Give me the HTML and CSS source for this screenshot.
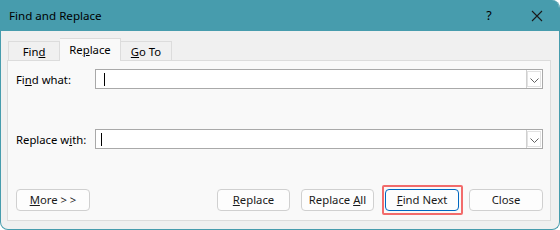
FILE: index.html
```html
<!DOCTYPE html>
<html>
<head>
<meta charset="utf-8">
<link rel="stylesheet" href="styles.css">
</head>
<body>
<div class="window">
  <div class="titlebar">
    <span class="title">Find and Replace</span>
    <span class="tb-help">?</span>
    <span class="tb-close">
      <svg width="12" height="12" viewBox="0 0 12 12"><path d="M1 1 L11 11 M11 1 L1 11" stroke="#1a1a1a" stroke-width="1.1" fill="none"/></svg>
    </span>
  </div>
  <div class="body">
    <div class="tabs">
      <div class="tab">Fin<u>d</u></div>
      <div class="tab active">Re<u>p</u>lace</div>
      <div class="tab"><u>G</u>o To</div>
    </div>
    <div class="panel">
      <div class="row">
        <label class="lbl">Fi<u>n</u>d what:</label>
        <div class="combo">
          <span class="caret"></span>
          <span class="drop"><svg width="9" height="5" viewBox="0 0 9 5"><path d="M0.5 0.5 L4.5 4.5 L8.5 0.5" stroke="#606060" stroke-width="1" fill="none"/></svg></span>
        </div>
      </div>
      <div class="row">
        <label class="lbl">Replace w<u>i</u>th:</label>
        <div class="combo">
          <span class="caret caret2"></span>
          <span class="drop"><svg width="9" height="5" viewBox="0 0 9 5"><path d="M0.5 0.5 L4.5 4.5 L8.5 0.5" stroke="#606060" stroke-width="1" fill="none"/></svg></span>
        </div>
      </div>
      <div class="buttons">
        <button class="btn"><u>M</u>ore &gt; &gt;</button>
        <div class="spacer"></div>
        <button class="btn"><u>R</u>eplace</button>
        <button class="btn">Replace <u>A</u>ll</button>
        <button class="btn default"><u>F</u>ind Next</button>
        <button class="btn">Close</button>
      </div>
    </div>
  </div>
</div>
</body>
</html>
```

FILE: styles.css
```css
html, body {
  margin: 0;
  padding: 0;
  background: #ffffff;
}
body {
  font-family: "Noto Sans", "Open Sans", sans-serif;
  font-size: 11.3px;
  color: #000;
}
u {
  text-decoration: underline;
  text-underline-offset: 1px;
}
.window {
  width: 560px;
  height: 230px;
  box-sizing: border-box;
  border: 1px solid #479cad;
  border-top: none;
  border-radius: 0 8px 8px 8px;
  background: #f0f0f0;
  overflow: hidden;
  display: flex;
  flex-direction: column;
}
.titlebar {
  height: 31px;
  flex: none;
  background: #479cad;
  display: flex;
  align-items: center;
  padding-left: 8px;
  font-size: 11.6px;
}
.title {
  flex: 1;
  padding-bottom: 1px;
}
.tb-help {
  width: 20px;
  font-size: 12.5px;
  margin-right: 32px;
  text-align: center;
  padding-bottom: 1px;
}
.tb-close {
  width: 12px;
  height: 12px;
  display: flex;
  margin-right: 16px;
}
.body {
  flex: 1;
  padding: 7px 8px 8px 6px;
  display: flex;
  flex-direction: column;
}
.tabs {
  display: flex;
  align-items: flex-end;
  height: 22px;
  padding-left: 1px;
  position: relative;
  z-index: 1;
}
.tab {
  height: 19px;
  box-sizing: border-box;
  border: 1px solid #dcdcdc;
  border-bottom: none;
  background: #f0f0f0;
  display: flex;
  align-items: center;
  justify-content: center;
  padding-top: 1px;
}
.tab:nth-child(1) { width: 52px; }
.tab:nth-child(3) { width: 51px; border-left: none; }
.tab.active {
  width: 61px;
  height: 23px;
  background: #f9f9f9;
  border-bottom: none;
  margin-bottom: -1px;
  border-left: none;
  padding-top: 0;
  padding-bottom: 2px;
}
.panel {
  height: 161px;
  box-sizing: border-box;
  border: 1px solid #dcdcdc;
  background: #f9f9f9;
  padding: 8px 7px 0 8px;
  display: flex;
  flex-direction: column;
}
.row {
  display: flex;
  align-items: center;
  height: 20px;
  margin-bottom: 40px;
}
.lbl {
  width: 79px;
  flex: none;
}
.combo {
  flex: 1;
  height: 20px;
  box-sizing: border-box;
  border: 1px solid #a9a9a9;
  background: #fff;
  display: flex;
  align-items: center;
  justify-content: space-between;
}
.caret {
  width: 1px;
  height: 13px;
  background: #000;
  margin-left: 8px;
}
.caret2 {
  margin-left: 5px;
}
.drop {
  width: 16px;
  height: 18px;
  box-sizing: border-box;
  border-left: 1px solid #d0d0d0;
  background: #fff;
  display: flex;
  align-items: center;
  justify-content: center;
  padding-top: 2px;
  outline: 1px solid #e2e2e2;
  outline-offset: -2px;
}
.buttons {
  display: flex;
  align-items: center;
  height: 22px;
}
.spacer { flex: 1; }
.btn {
  width: 73px;
  height: 22px;
  box-sizing: border-box;
  border: 1px solid #d0d0d0;
  border-radius: 4px;
  background: #fdfdfd;
  font-family: inherit;
  font-size: 11.3px;
  color: #1a1a1a;
  padding: 0 0 1px 0;
  margin: 0 0 0 11px;
}
.btn:first-child { margin-left: 0; width: 74px; }
.btn.default {
  border-color: #0067c0;
  width: 74px;
  position: relative;
}
.btn.default::after {
  content: "";
  position: absolute;
  left: -4px;
  top: -5px;
  right: -5px;
  bottom: -5px;
  border: 2px solid #f26b6b;
  border-radius: 2px;
  pointer-events: none;
}
.btn:last-child { width: 74px; margin-left: 10px; }
```
